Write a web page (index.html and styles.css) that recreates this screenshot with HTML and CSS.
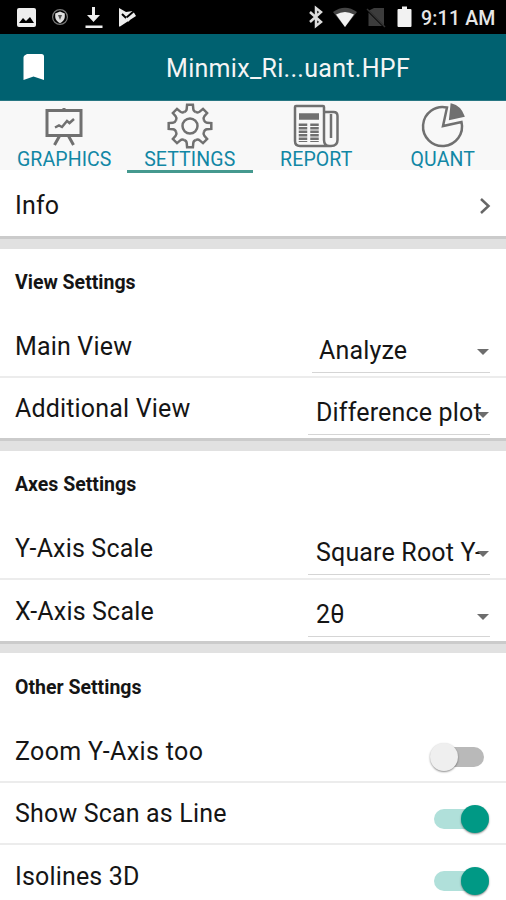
FILE: index.html
```html
<!DOCTYPE html>
<html lang="en">
<head>
<meta charset="utf-8">
<title>Settings</title>
<link rel="stylesheet" href="styles.css">
</head>
<body>
<div class="screen">
  <div class="status">
    <svg class="status-left" width="140" height="34" viewBox="0 0 140 34">
      <rect x="17" y="8" width="19" height="19" rx="2" fill="#eee"/>
      <path d="M19 23l4-5 3 3 4-4 4 6z" fill="#000"/>
      <circle cx="60" cy="17" r="7.4" fill="none" stroke="#777" stroke-width="1.2"/>
      <path d="M60 11.5l4.8 2v3.5q-.5 4-4.8 6.2q-4.300-2.200-4.800-6.200v-3.500z" fill="#ddd"/>
      <path d="M58 15h4l-2 5z" fill="#555"/>
      <path d="M92 7h3v8h5l-6.500 7-6.500-7h5zM85.500 25.500h17v2.500h-17z" fill="#eee"/>
      <path d="M119 8l7 4 7-1 3 5-16 10.500h-1z" fill="#eee"/>
      <path d="M122 14l4 4 8-7" fill="none" stroke="#000" stroke-width="2"/>
      <path d="M126 18l3 3" stroke="#eee" stroke-width="2"/>
    </svg>
    <svg class="status-right" width="110" height="34" viewBox="307 0 110 34">
      <path d="M310 12l11 10-5 4V8l5 4-11 10" fill="none" stroke="#ddd" stroke-width="2.500"/>
      <path d="M333 12q12-8.500 24 0l-12 15z" fill="#454545"/>
      <path d="M336 14.500q9-5 18 0L345 27z" fill="#f2f2f2"/>
      <path d="M374 8h10v17.500L369 10.500zM368.500 12.500L382 26h-13.500z" fill="#3c3c3c"/>
      <path d="M367 9l18 18" stroke="#333" stroke-width="1.500"/>
      <path d="M402 6.500h5V9h3.500q1 0 1 1v16q0 1-1 1h-12q-1 0-1-1V10q0-1 1-1h3.500z" fill="#f2f2f2"/>
    </svg>
    <span class="clock">9:11 AM</span>
  </div>

  <header class="appbar">
    <svg class="bookmark" width="22" height="28" viewBox="0 0 22 28"><path d="M4 1h14.500q2.500 0 2.500 2.500v23.500L10.500 23.500 .5 27V4.500q0-1 1-2z" fill="#fff"/></svg>
    <h1 class="title">Minmix_Ri...uant.HPF</h1>
  </header>

  <nav class="tabs">
    <div class="tab first">
      <svg width="48" height="48" viewBox="-24 -24 48 48" fill="none" stroke="#707070" stroke-width="3">
        <path d="M-17-15.500H17V9.500H-17zM0-18v2M-4.500 10L-9.500 19M4.500 10L9.500 19"/>
        <path d="M-9 1.500l4-2 3 1.500 5-6 2.500 2 4.500-4" stroke-width="2.500"/>
      </svg>
      <span class="tab-label">GRAPHICS</span>
    </div>
    <div class="tab active">
      <svg width="48" height="48" viewBox="-24 -24 48 48" fill="none" stroke="#707070" stroke-width="2.500">
        <defs><path id="tooth" d="M-5.800-14q2.300-.8 2.500-3l.4-4.300H2.900l.4 4.300q.2 2.200 2.500 3"/></defs>
        <use href="#tooth"/><use href="#tooth" transform="rotate(45)"/><use href="#tooth" transform="rotate(90)"/><use href="#tooth" transform="rotate(135)"/>
        <use href="#tooth" transform="rotate(180)"/><use href="#tooth" transform="rotate(225)"/><use href="#tooth" transform="rotate(270)"/><use href="#tooth" transform="rotate(315)"/>
        <circle r="7.500"/>
      </svg>
      <span class="tab-label">SETTINGS</span>
    </div>
    <div class="tab">
      <svg width="48" height="48" viewBox="-24 -24 48 48" fill="none" stroke="#707070" stroke-width="2.500">
        <path d="M8-13.500V-19q0-1-1-1H-20q-1 0-1 1V15q0 5 5 5H15q6.500 0 6.500-6V-10q0-4-4-4H9q-1 0-1 1V14q0 6 5.500 6M15-12V12"/>
        <path d="M-17-9.500H3" stroke-width="6.500"/>
        <path d="M-13-2.500V16M-1.500-2.500V16" stroke-width="8.500" stroke-dasharray="2.500 1"/>
      </svg>
      <span class="tab-label">REPORT</span>
    </div>
    <div class="tab">
      <svg width="48" height="48" viewBox="-24 -24 48 48" fill="none" stroke="#707070" stroke-width="2.500">
        <path d="M4-18.500A19.500 19.500 0 1 0 18.500-4L0 0z"/>
        <path d="M8.500-21.500Q17-19.500 20.500-10L7-7z" fill="#707070" stroke-width="2"/>
      </svg>
      <span class="tab-label">QUANT</span>
    </div>
  </nav>

  <section class="card info">
    <span class="label">Info</span>
    <svg width="12" height="18" viewBox="0 0 12 18"><path d="M2 2l7.500 7L2 16" fill="none" stroke="#666" stroke-width="2.500"/></svg>
  </section>
  <div class="gap"></div>

  <section class="card">
    <h2 class="heading">View Settings</h2>
    <div class="row"><span class="label">Main View</span>
      <div class="select short"><span class="value">Analyze</span><i class="caret"></i></div></div>
    <div class="row"><span class="label">Additional View</span>
      <div class="select"><span class="value">Difference plot</span><i class="caret"></i></div></div>
  </section>
  <div class="gap"></div>

  <section class="card">
    <h2 class="heading">Axes Settings</h2>
    <div class="row"><span class="label">Y-Axis Scale</span>
      <div class="select"><span class="value">Square Root Y-</span><i class="caret"></i></div></div>
    <div class="row"><span class="label">X-Axis Scale</span>
      <div class="select"><span class="value">2θ</span><i class="caret"></i></div></div>
  </section>
  <div class="gap"></div>

  <section class="card toggles">
    <h2 class="heading">Other Settings</h2>
    <div class="row"><span class="label wide">Zoom Y-Axis too</span><div class="switch"></div></div>
    <div class="row"><span class="label">Show Scan as Line</span><div class="switch on"></div></div>
    <div class="row"><span class="label">Isolines 3D</span><div class="switch on"></div></div>
  </section>
</div>
</body>
</html>
```
FILE: styles.css
```css
* { box-sizing: border-box; }
body { margin: 0; font-family: Roboto, "Liberation Sans", sans-serif; background: #fff; overflow: hidden; }
h1, h2 { margin: 0; }
svg { display: block; flex: none; }
.screen { width: 506px; height: 900px; overflow: hidden; color: #151515; }
.status { height: 34px; background: #000; display: flex; align-items: center; }
.status-right { margin-left: 167px; }
.clock { margin-left: 4px; color: #e6e6e6; font-size: 19.5px; font-weight: 500; line-height: 34px; padding-top: 3px; white-space: nowrap; letter-spacing: .2px; }
.appbar { height: 67px; background: #006170; display: flex; align-items: center; border-bottom: 1px solid #287783; }
.bookmark { margin-left: 23px; }
.title { margin-left: 121px; padding-top: 3px; color: #f5f5f5; font-size: 25px; font-weight: 400; line-height: 30px; white-space: nowrap; letter-spacing: .3px; }
.tabs { height: 69px; display: grid; grid-template-columns: repeat(4, 1fr); background: #f8f8f8; }
.tab { display: flex; flex-direction: column; align-items: center; padding-top: 1px; border-bottom: 3px solid transparent; }
.tab.first { padding-left: 2px; }
.tab.active { border-bottom-color: #45998f; }
.tab-label { color: #1287a5; font-size: 19.5px; line-height: 20px; white-space: nowrap; letter-spacing: .1px; }
.card { background: #fff; }
.info { height: 66px; display: flex; align-items: center; justify-content: space-between; padding: 5px 15px 0 15px; }
.gap { height: 12.5px; background: #e1e1e1; border-top: 3px solid #cbcbcb; }
.heading { height: 67px; padding: 1px 0 0 15px; line-height: 66px; font-size: 19.5px; font-weight: 700; white-space: nowrap; }
.row { height: 62px; display: flex; align-items: center; justify-content: space-between; padding: 0 16px 0 15px; border-bottom: 2px solid #ececec; }
.row:last-child { height: 60.8px; border-bottom: 0; }
.label, .value { font-size: 25px; line-height: 30px; white-space: nowrap; letter-spacing: .17px; }
.row .label { padding-top: 2px; }
.row:last-child .label { padding-top: 3px; }
.label.wide { letter-spacing: .35px; }
.select { position: relative; width: 182px; height: 46px; margin-top: 11px; padding: 9px 0 0 8px; border-bottom: 1px solid #d5d5d5; align-self: flex-start; }
.row:last-child .select { margin-top: 11.5px; }
.select.short { width: 178px; padding-left: 7px; }
.value { display: block; }
.caret { position: absolute; right: 1px; top: 22.5px; border: 6.5px solid transparent; border-top-color: #6d6d6d; border-bottom: 0; }
.toggles .heading { height: 68px; padding-top: 2px; }
.toggles .row { height: 61.8px; }
.toggles .row .label { padding-top: 3px; }
.switch { position: relative; width: 50px; height: 20px; margin: 12px 6px 0 0; border-radius: 10px; background: #b9b9b9; }
.toggles .row:last-child .switch { margin-top: 10px; }
.switch::before { content: ""; position: absolute; left: -4px; top: -4px; width: 28px; height: 28px; border-radius: 50%; background: #efefef; box-shadow: 0 1px 2px rgba(0, 0, 0, .45); }
.switch.on { background: #b0e0da; }
.switch.on::before { left: 26.5px; background: #009985; }
```
